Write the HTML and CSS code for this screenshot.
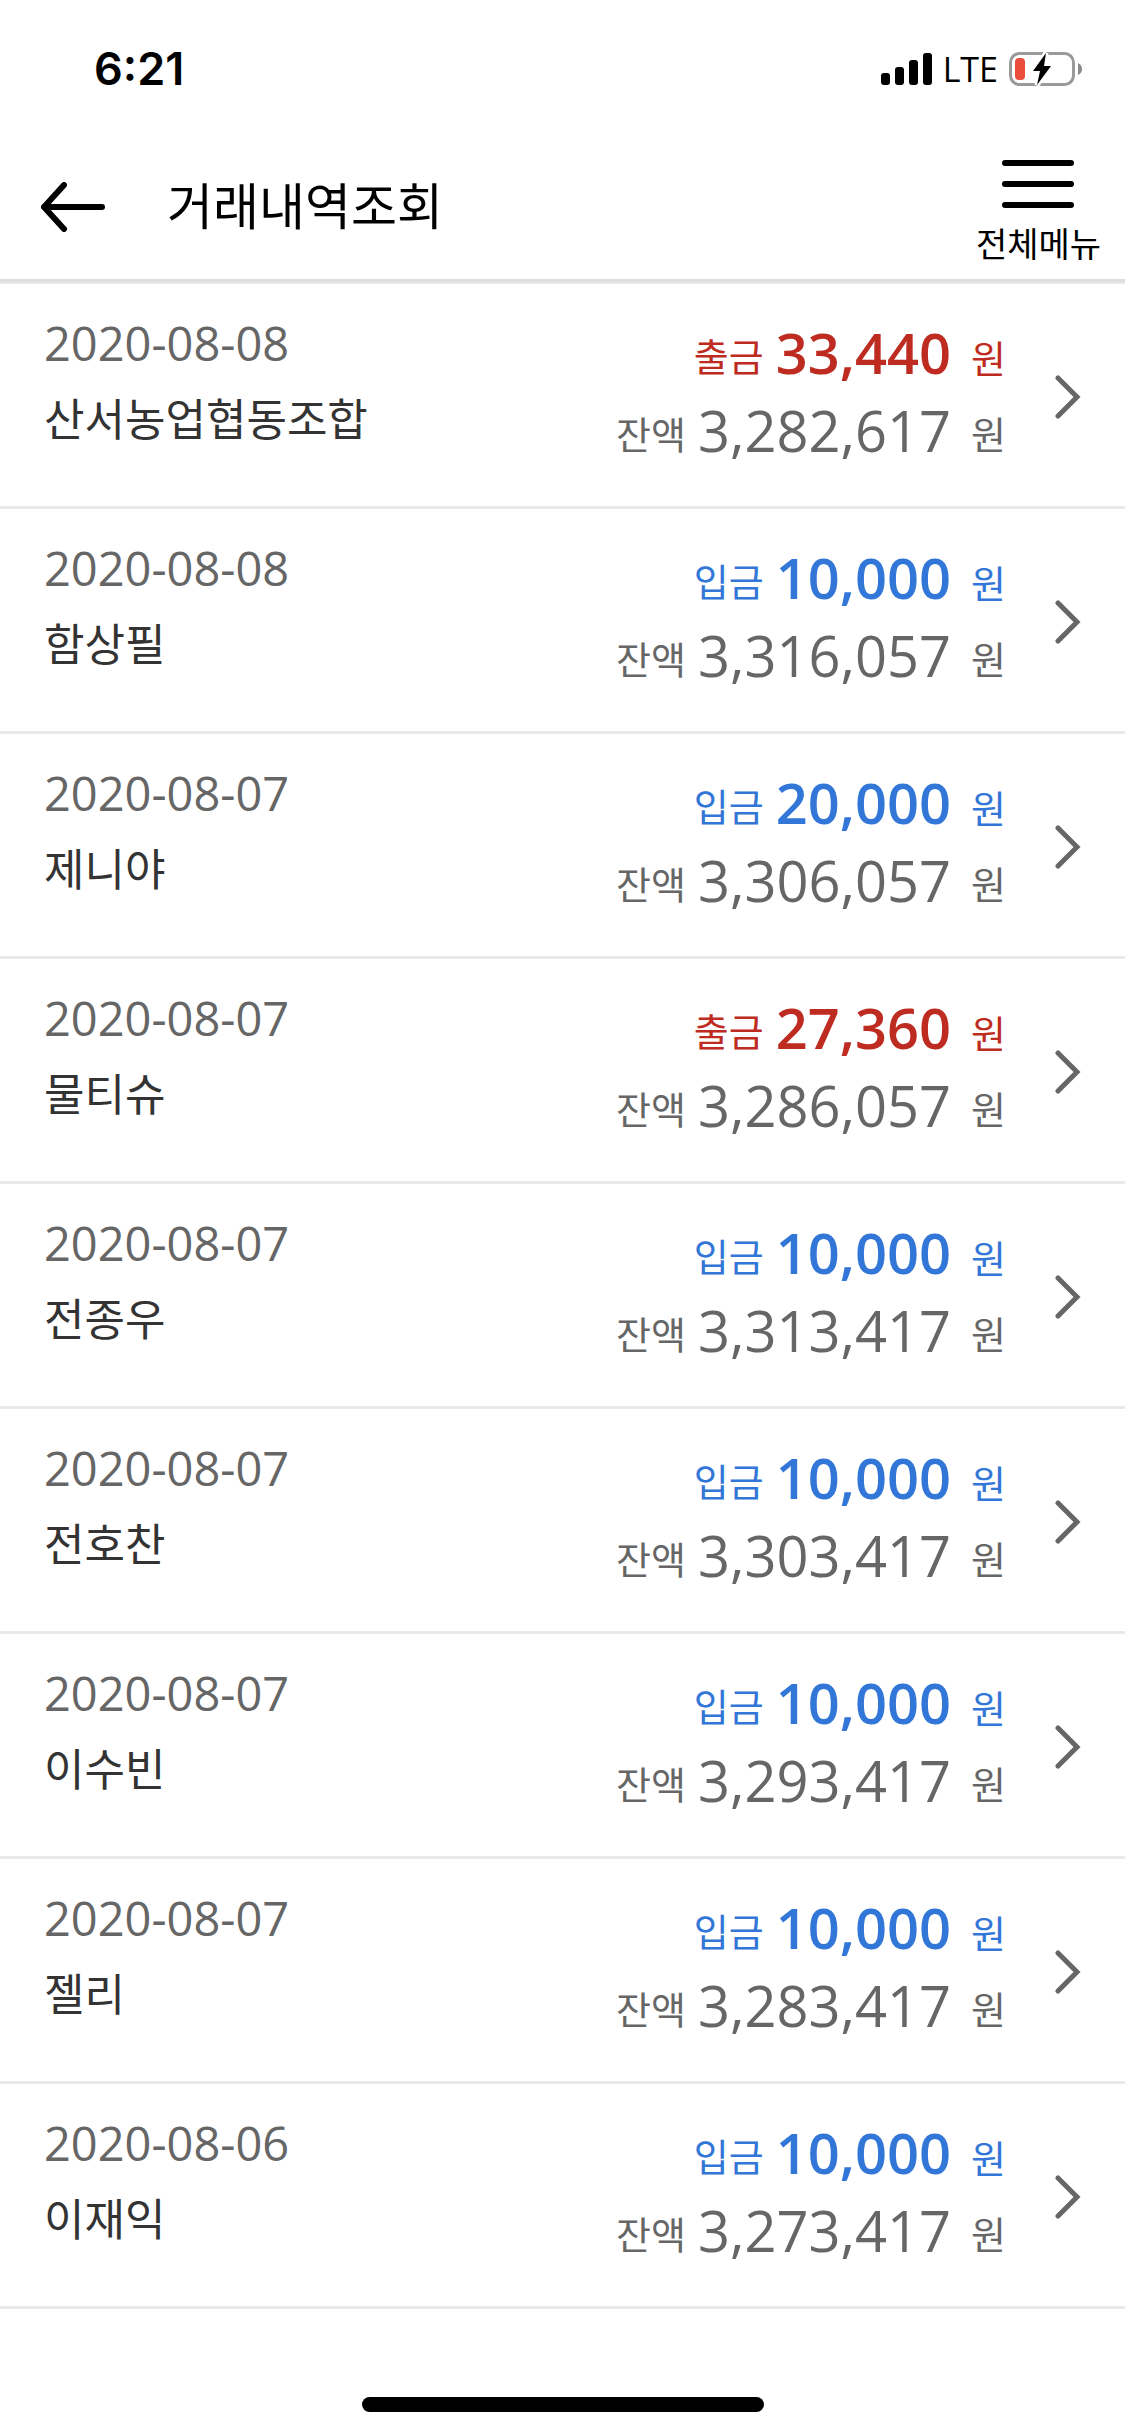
FILE: index.html
```html
<!DOCTYPE html>
<html lang="ko">
<head>
<meta charset="utf-8">
<meta name="viewport" content="width=device-width, initial-scale=1">
<title>거래내역조회</title>
<link rel="stylesheet" href="styles.css">
</head>
<body>
<svg class="sprite" aria-hidden="true">
  <symbol id="chevron" viewBox="0 0 26 44"><path d="M3 3 L22 22 L3 41" fill="none" stroke="currentColor" stroke-width="5" stroke-linecap="round"/></symbol>
</svg>
<div class="status">
  <span class="time">6:21</span>
  <div class="indicators">
    <svg width="51" height="32" viewBox="0 0 51 32" aria-hidden="true"><rect y="20" width="9" height="12" rx="3"/><rect x="14" y="14" width="9" height="18" rx="3"/><rect x="28" y="7" width="9" height="25" rx="3"/><rect x="42" width="9" height="32" rx="3"/></svg>
    <span class="network">LTE</span>
    <svg width="73" height="36" viewBox="0 0 73 36" aria-hidden="true">
      <rect x="1.5" y="2.5" width="63" height="31" rx="9" fill="none" stroke="#9a9a9a" stroke-width="3"/>
      <path d="M69 12 Q73 14 73 18 Q73 22 69 24Z" fill="#8a8a8a"/>
      <rect x="6" y="7" width="10" height="22" rx="4" fill="#eb4d3d"/>
      <path d="M37 2 L24 20 H31 L28 34 L42 15 H35Z" fill="#000" stroke="#fff" stroke-width="5" paint-order="stroke"/>
    </svg>
  </div>
</div>
<header class="header">
  <button class="back" type="button" aria-label="뒤로"><svg width="66" height="50" viewBox="0 0 66 50"><path d="M24 3 L4 25 L24 47 M4 25 H62" fill="none" stroke="#000" stroke-width="6" stroke-linecap="round" stroke-linejoin="round"/></svg></button>
  <h1 class="title">거래내역조회</h1>
  <button class="menu" type="button"><svg width="72" height="48" viewBox="0 0 72 48" aria-hidden="true"><path d="M3 3H69M3 24H69M3 45H69" stroke="#000" stroke-width="6" stroke-linecap="round"/></svg><span>전체메뉴</span></button>
</header>
<main>
<ul class="list">
  <li><a class="row" href="#"><div class="who"><p class="date">2020-08-08</p><p class="name">산서농업협동조합</p></div><div class="sums"><p class="amount out"><span>출금</span><strong>33,440</strong><span class="won">원</span></p><p class="amount"><span>잔액</span><b>3,282,617</b><span class="won">원</span></p></div><svg class="chevron" aria-hidden="true"><use href="#chevron"/></svg></a></li>
  <li><a class="row" href="#"><div class="who"><p class="date">2020-08-08</p><p class="name">함상필</p></div><div class="sums"><p class="amount in"><span>입금</span><strong>10,000</strong><span class="won">원</span></p><p class="amount"><span>잔액</span><b>3,316,057</b><span class="won">원</span></p></div><svg class="chevron" aria-hidden="true"><use href="#chevron"/></svg></a></li>
  <li><a class="row" href="#"><div class="who"><p class="date">2020-08-07</p><p class="name">제니야</p></div><div class="sums"><p class="amount in"><span>입금</span><strong>20,000</strong><span class="won">원</span></p><p class="amount"><span>잔액</span><b>3,306,057</b><span class="won">원</span></p></div><svg class="chevron" aria-hidden="true"><use href="#chevron"/></svg></a></li>
  <li><a class="row" href="#"><div class="who"><p class="date">2020-08-07</p><p class="name">물티슈</p></div><div class="sums"><p class="amount out"><span>출금</span><strong>27,360</strong><span class="won">원</span></p><p class="amount"><span>잔액</span><b>3,286,057</b><span class="won">원</span></p></div><svg class="chevron" aria-hidden="true"><use href="#chevron"/></svg></a></li>
  <li><a class="row" href="#"><div class="who"><p class="date">2020-08-07</p><p class="name">전종우</p></div><div class="sums"><p class="amount in"><span>입금</span><strong>10,000</strong><span class="won">원</span></p><p class="amount"><span>잔액</span><b>3,313,417</b><span class="won">원</span></p></div><svg class="chevron" aria-hidden="true"><use href="#chevron"/></svg></a></li>
  <li><a class="row" href="#"><div class="who"><p class="date">2020-08-07</p><p class="name">전호찬</p></div><div class="sums"><p class="amount in"><span>입금</span><strong>10,000</strong><span class="won">원</span></p><p class="amount"><span>잔액</span><b>3,303,417</b><span class="won">원</span></p></div><svg class="chevron" aria-hidden="true"><use href="#chevron"/></svg></a></li>
  <li><a class="row" href="#"><div class="who"><p class="date">2020-08-07</p><p class="name">이수빈</p></div><div class="sums"><p class="amount in"><span>입금</span><strong>10,000</strong><span class="won">원</span></p><p class="amount"><span>잔액</span><b>3,293,417</b><span class="won">원</span></p></div><svg class="chevron" aria-hidden="true"><use href="#chevron"/></svg></a></li>
  <li><a class="row" href="#"><div class="who"><p class="date">2020-08-07</p><p class="name">젤리</p></div><div class="sums"><p class="amount in"><span>입금</span><strong>10,000</strong><span class="won">원</span></p><p class="amount"><span>잔액</span><b>3,283,417</b><span class="won">원</span></p></div><svg class="chevron" aria-hidden="true"><use href="#chevron"/></svg></a></li>
  <li><a class="row" href="#"><div class="who"><p class="date">2020-08-06</p><p class="name">이재익</p></div><div class="sums"><p class="amount in"><span>입금</span><strong>10,000</strong><span class="won">원</span></p><p class="amount"><span>잔액</span><b>3,273,417</b><span class="won">원</span></p></div><svg class="chevron" aria-hidden="true"><use href="#chevron"/></svg></a></li>
</ul>
</main>
<div class="home"></div>
</body>
</html>
```

FILE: styles.css
```css
* { box-sizing: border-box; margin: 0; padding: 0; }
body {
  min-height: 100vh;
  display: flex;
  flex-direction: column;
  background: #fff;
  color: #000;
  font-family: "Noto Sans CJK KR", sans-serif;
}
button { border: 0; background: none; color: inherit; font: inherit; }
svg { display: block; }
.sprite { display: none; }

.status {
  display: flex;
  justify-content: space-between;
  align-items: center;
  height: 138px;
  padding: 0 43px 0 94px;
}
.time { font: 600 45px/60px "Inter", sans-serif; }
.indicators { display: flex; align-items: center; gap: 11px; }
.network { font: 500 34px/40px "Open Sans", sans-serif; }

.header {
  display: flex;
  align-items: center;
  height: 144px;
  padding: 0 24px 3px 40px;
  border-bottom: 3px solid #ddd;
}
.back { margin-right: 61px; }
.title { flex: 1; padding-bottom: 8px; font-size: 50px; font-weight: 400; line-height: 60px; }
.menu {
  display: flex;
  flex-direction: column;
  align-items: center;
  gap: 10px;
  padding-top: 14px;
  font-size: 34px;
  line-height: 50px;
}

.list { list-style: none; border-top: 2px solid #e9e9e9; }
.row {
  display: flex;
  align-items: flex-start;
  padding: 18px 44px 37px 44px;
  border-bottom: 3px solid #e9e9e9;
  color: #666;
  text-decoration: none;
}
.who { flex: 1; padding-top: 2px; }
.date { font-family: "Open Sans", sans-serif; font-size: 47px; font-weight: 400; line-height: 78px; }
.name { font-size: 44px; line-height: 70px; color: #333; }
.sums { padding-top: 11px; }
.amount {
  display: flex;
  justify-content: flex-end;
  align-items: center;
  gap: 12px;
  font-size: 38px;
  line-height: 40px;
}
.amount span { padding-top: 6px; }
.amount strong, .amount b { font-family: "Open Sans", sans-serif; font-size: 56px; line-height: 78px; }
.amount strong { font-weight: 600; }
.amount b { font-weight: 400; }
.amount .won { padding-left: 8px; }
.in .won, .out .won { padding-top: 10px; }
.out { color: #be2b21; }
.in { color: #3276d8; }
.chevron { width: 26px; height: 44px; margin: 73px 0 0 49px; }

.home {
  width: 402px;
  height: 15px;
  margin: auto auto 24px;
  border-radius: 8px;
  background: #000;
}
```
